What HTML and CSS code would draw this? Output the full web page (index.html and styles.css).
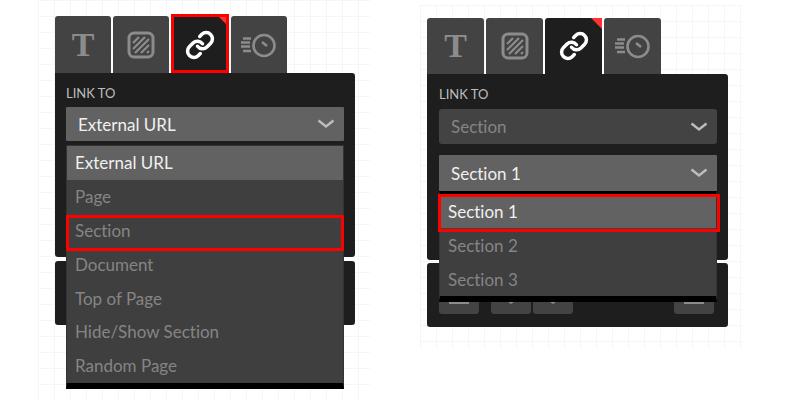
FILE: index.html
```html
<!DOCTYPE html>
<html lang="en">

<head>
  <meta charset="UTF-8">
  <title>Link Settings</title>
  <link rel="stylesheet" href="styles.css">
</head>

<body>

  <div class="page">

    <div class="canvas canvas-left">
      <div class="tabs">
        <div class="tab"><span class="tab-t">T</span></div>
        <div class="tab">
          <svg width="36" height="36" viewBox="0 0 36 36">
            <rect x="6" y="6" width="24" height="24" rx="5" fill="none" stroke="#8c8c8c" stroke-width="3" />
            <path d="M10 16l6-6M10 22l12-12M12 26l14-14M18 26l8-8M24 26l2-2" stroke="#8c8c8c" stroke-width="2.2" fill="none" />
          </svg>
        </div>
        <div class="tab tab-active tab-marked">
          <svg width="30" height="30" viewBox="0 0 24 24">
            <path d="M10 13a5 5 0 0 0 7.54.54l3-3a5 5 0 0 0-7.07-7.07l-1.72 1.71" fill="none" stroke="#fff" stroke-width="2.8" stroke-linecap="round" />
            <path d="M14 11a5 5 0 0 0-7.54-.54l-3 3a5 5 0 0 0 7.07 7.07l1.71-1.71" fill="none" stroke="#fff" stroke-width="2.8" stroke-linecap="round" />
          </svg>
        </div>
        <div class="tab">
          <svg width="40" height="36" viewBox="0 0 40 36">
            <circle cx="25" cy="18.5" r="10.5" fill="none" stroke="#8c8c8c" stroke-width="2.6" />
            <path d="M23 15l5 4" stroke="#8c8c8c" stroke-width="2.6" fill="none" />
            <path d="M4 11.5h8M2 15.5h9M2 19.5h9M4 24h8" stroke="#8c8c8c" stroke-width="2.4" fill="none" />
          </svg>
        </div>
      </div>

      <div class="panel panel-main panel-main-left">
        <div class="panel-label">LINK TO</div>
        <div class="select select-open">
          <span>External URL</span>
          <svg class="chevron" width="18" height="10" viewBox="0 0 18 10"><path d="M1.5 1.5L9 7.5l7.5-6" fill="none" stroke="#bdbdbd" stroke-width="2.4" /></svg>
        </div>
      </div>
      <div class="panel panel-sub"></div>

      <div class="menu menu-left">
        <div class="menu-item selected">External URL</div>
        <div class="menu-item">Page</div>
        <div class="menu-item marked">Section</div>
        <div class="menu-item">Document</div>
        <div class="menu-item">Top of Page</div>
        <div class="menu-item">Hide/Show Section</div>
        <div class="menu-item">Random Page</div>
      </div>
    </div>

    <div class="canvas canvas-right">
      <div class="tabs">
        <div class="tab"><span class="tab-t">T</span></div>
        <div class="tab">
          <svg width="36" height="36" viewBox="0 0 36 36">
            <rect x="6" y="6" width="24" height="24" rx="5" fill="none" stroke="#8c8c8c" stroke-width="3" />
            <path d="M10 16l6-6M10 22l12-12M12 26l14-14M18 26l8-8M24 26l2-2" stroke="#8c8c8c" stroke-width="2.2" fill="none" />
          </svg>
        </div>
        <div class="tab tab-current tab-marked">
          <svg width="30" height="30" viewBox="0 0 24 24">
            <path d="M10 13a5 5 0 0 0 7.54.54l3-3a5 5 0 0 0-7.07-7.07l-1.72 1.71" fill="none" stroke="#fff" stroke-width="2.8" stroke-linecap="round" />
            <path d="M14 11a5 5 0 0 0-7.54-.54l-3 3a5 5 0 0 0 7.07 7.07l1.71-1.71" fill="none" stroke="#fff" stroke-width="2.8" stroke-linecap="round" />
          </svg>
        </div>
        <div class="tab">
          <svg width="40" height="36" viewBox="0 0 40 36">
            <circle cx="25" cy="18.5" r="10.5" fill="none" stroke="#8c8c8c" stroke-width="2.6" />
            <path d="M23 15l5 4" stroke="#8c8c8c" stroke-width="2.6" fill="none" />
            <path d="M4 11.5h8M2 15.5h9M2 19.5h9M4 24h8" stroke="#8c8c8c" stroke-width="2.4" fill="none" />
          </svg>
        </div>
      </div>

      <div class="panel panel-main">
        <div class="panel-label">LINK TO</div>
        <div class="select select-dim">
          <span>Section</span>
          <svg class="chevron" width="18" height="10" viewBox="0 0 18 10"><path d="M1.5 1.5L9 7.5l7.5-6" fill="none" stroke="#bdbdbd" stroke-width="2.4" /></svg>
        </div>
        <div class="select select-open select-second">
          <span>Section 1</span>
          <svg class="chevron" width="18" height="10" viewBox="0 0 18 10"><path d="M1.5 1.5L9 7.5l7.5-6" fill="none" stroke="#bdbdbd" stroke-width="2.4" /></svg>
        </div>
      </div>
      <div class="panel panel-sub panel-sub-right">
        <div class="mini-btn mini-one"></div>
        <div class="mini-btn mini-two"></div>
        <div class="mini-btn mini-two mini-joined"></div>
        <div class="mini-btn mini-one mini-end"></div>
      </div>

      <div class="menu menu-right">
        <div class="menu-item selected marked">Section 1</div>
        <div class="menu-item">Section 2</div>
        <div class="menu-item">Section 3</div>
      </div>
    </div>

  </div>

</body>

</html>
```

FILE: styles.css
```css
* {
  box-sizing: border-box;
}

body {
  margin: 0;
  background: #fff;
  font-family: Lato, "Open Sans", sans-serif;
  font-variant-ligatures: none;
  overflow: hidden;
}

.page {
  display: flex;
  align-items: flex-start;
  width: 800px;
  height: 400px;
  padding-left: 38px;
}

.canvas {
  position: relative;
  background-color: #fff;
  background-image:
    linear-gradient(#f6f6f6 1px, transparent 1px),
    linear-gradient(90deg, #f6f6f6 1px, transparent 1px);
  background-size: 16px 16px;
}

.canvas-left {
  width: 332px;
  height: 400px;
  padding: 16px 0 0 17px;
}

.canvas-right {
  width: 322px;
  height: 344px;
  margin: 5px 0 0 50px;
  padding: 13px 0 0 7px;
}

.tabs {
  display: flex;
  gap: 2px;
  height: 57px;
}

.canvas-right .tabs {
  height: 56px;
}

.tab {
  position: relative;
  display: flex;
  align-items: center;
  justify-content: center;
  width: 56px;
  background: #434343;
  border-radius: 3px 3px 0 0;
}

.canvas-right .tab {
  width: 57px;
}

.tab-t {
  font-family: "Liberation Serif", serif;
  font-weight: bold;
  font-size: 34px;
  line-height: 1;
  color: #8c8c8c;
}

.tab-active,
.tab-current {
  background: #1e1e1e;
}

.tab-active {
  width: 58px;
  margin-top: -2px;
  height: 59px;
  padding-top: 3px;
  border: 3px solid #f00;
  border-radius: 0;
}

.tab-marked::after {
  content: "";
  position: absolute;
  top: 0;
  right: 0;
  border-top: 11px solid #ff3131;
  border-left: 11px solid transparent;
}

.tab-active.tab-marked::after {
  border-top-width: 7px;
  border-left-width: 7px;
}

.panel {
  background: #1e1e1e;
  border-radius: 0 3px 3px 3px;
  width: 300px;
}

.canvas-right .panel {
  width: 301px;
}

.panel-main {
  height: 186px;
  padding: 12px 11px 0 12px;
}

.panel-main-left {
  height: 184px;
  padding-left: 11px;
}

.panel-sub {
  height: 64px;
  margin-top: 4px;
  border-radius: 3px;
}

.canvas-right .panel-sub-right {
  position: relative;
  margin-top: 3px;
}

.panel-label {
  font-size: 13px;
  line-height: 16px;
  color: #bdbdbd;
  margin-bottom: 7px;
}

.panel-main-left .panel-label {
  margin-bottom: 6px;
}

.select {
  display: flex;
  align-items: center;
  justify-content: space-between;
  height: 35px;
  padding: 0 9px 0 12px;
  font-size: 17px;
  border-radius: 1px;
}

.panel-main-left .select {
  height: 34px;
}

.select-open {
  background: #626262;
  color: #f0f0f0;
}

.select-dim {
  background: #434343;
  color: #858585;
  border-radius: 3px;
}

.select-second {
  margin-top: 11px;
  height: 36px;
}

.chevron {
  display: block;
}

.menu {
  position: absolute;
  z-index: 1;
  background: #3f3f3f;
  border: 1px solid #333;
  border-bottom: 6px solid #000;
  font-size: 17px;
}

.menu-left {
  left: 28px;
  top: 145px;
  width: 278px;
}

.menu-right {
  left: 19px;
  top: 186px;
  width: 278px;
  border-top: 3px solid #000;
}

.menu-item {
  position: relative;
  display: flex;
  align-items: center;
  height: 34px;
  padding-left: 8px;
  color: #858585;
}

.menu-left .menu-item {
  height: 33.8px;
}

.menu-item.selected {
  background: #626262;
  color: #f0f0f0;
}

.menu-item.marked::after {
  content: "";
  position: absolute;
  box-sizing: border-box;
  border: 3px solid #f00;
}

.menu-left .marked::after {
  left: -1px;
  right: -1px;
  top: 1px;
  height: 36px;
}

.menu-right .marked::after {
  left: -2px;
  right: -4px;
  top: 0;
  height: 38px;
}

.mini-btn {
  position: absolute;
  bottom: 13px;
  width: 40px;
  height: 20px;
  background: #434343;
  border-radius: 3px;
}

.mini-one {
  left: 12px;
}

.mini-two {
  left: 64px;
}

.mini-joined {
  left: 106px;
}

.mini-end {
  left: 247px;
}

.mini-one::after {
  content: "";
  position: absolute;
  top: 6px;
  left: 10px;
  right: 10px;
  height: 4px;
  background: #8c8c8c;
}

.mini-two::after {
  content: "";
  position: absolute;
  top: 6px;
  left: 14px;
  border-top: 4px solid #8c8c8c;
  border-left: 6px solid transparent;
  border-right: 6px solid transparent;
}
```
